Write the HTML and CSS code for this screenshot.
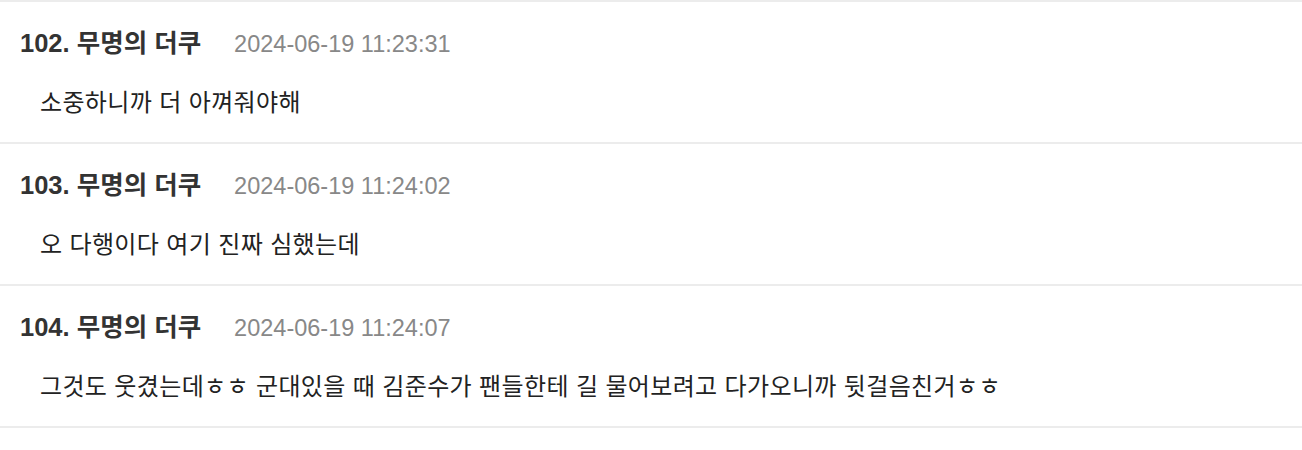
FILE: index.html
```html
<!DOCTYPE html>
<html lang="ko">
<head>
<meta charset="utf-8">
<link rel="stylesheet" href="styles.css">
</head>
<body>
<div class="list">
  <div class="item">
    <div class="head"><span class="name">102. 무명의 더쿠</span><span class="date">2024-06-19 11:23:31</span></div>
    <div class="body">소중하니까 더 아껴줘야해</div>
  </div>
  <div class="item">
    <div class="head"><span class="name">103. 무명의 더쿠</span><span class="date">2024-06-19 11:24:02</span></div>
    <div class="body">오 다행이다 여기 진짜 심했는데</div>
  </div>
  <div class="item">
    <div class="head"><span class="name">104. 무명의 더쿠</span><span class="date">2024-06-19 11:24:07</span></div>
    <div class="body">그것도 웃겼는데ㅎㅎ 군대있을 때 김준수가 팬들한테 길 물어보려고 다가오니까 뒷걸음친거ㅎㅎ</div>
  </div>
</div>
</body>
</html>
```

FILE: styles.css
```css
html, body {
  margin: 0;
  padding: 0;
  background: #ffffff;
}
body {
  font-family: "Liberation Sans", "Noto Sans CJK KR", sans-serif;
}
.list {
  border-bottom: 2px solid #ececec;
}
.item {
  border-top: 2px solid #ececec;
  height: 140px;
  box-sizing: content-box;
  padding: 0 20px;
  display: flex;
  flex-direction: column;
}
.head {
  display: flex;
  align-items: baseline;
  gap: 33px;
  margin-top: 25px;
  line-height: 32px;
}
.name {
  font-size: 25.5px;
  font-weight: bold;
  color: #333333;
}
.date {
  font-size: 23.5px;
  color: #888888;
}
.body {
  margin-top: 25px;
  padding-left: 20px;
  font-family: "Noto Sans CJK KR", sans-serif;
  font-size: 24px;
  line-height: 32px;
  letter-spacing: 0.35px;
  color: #222222;
}
```
